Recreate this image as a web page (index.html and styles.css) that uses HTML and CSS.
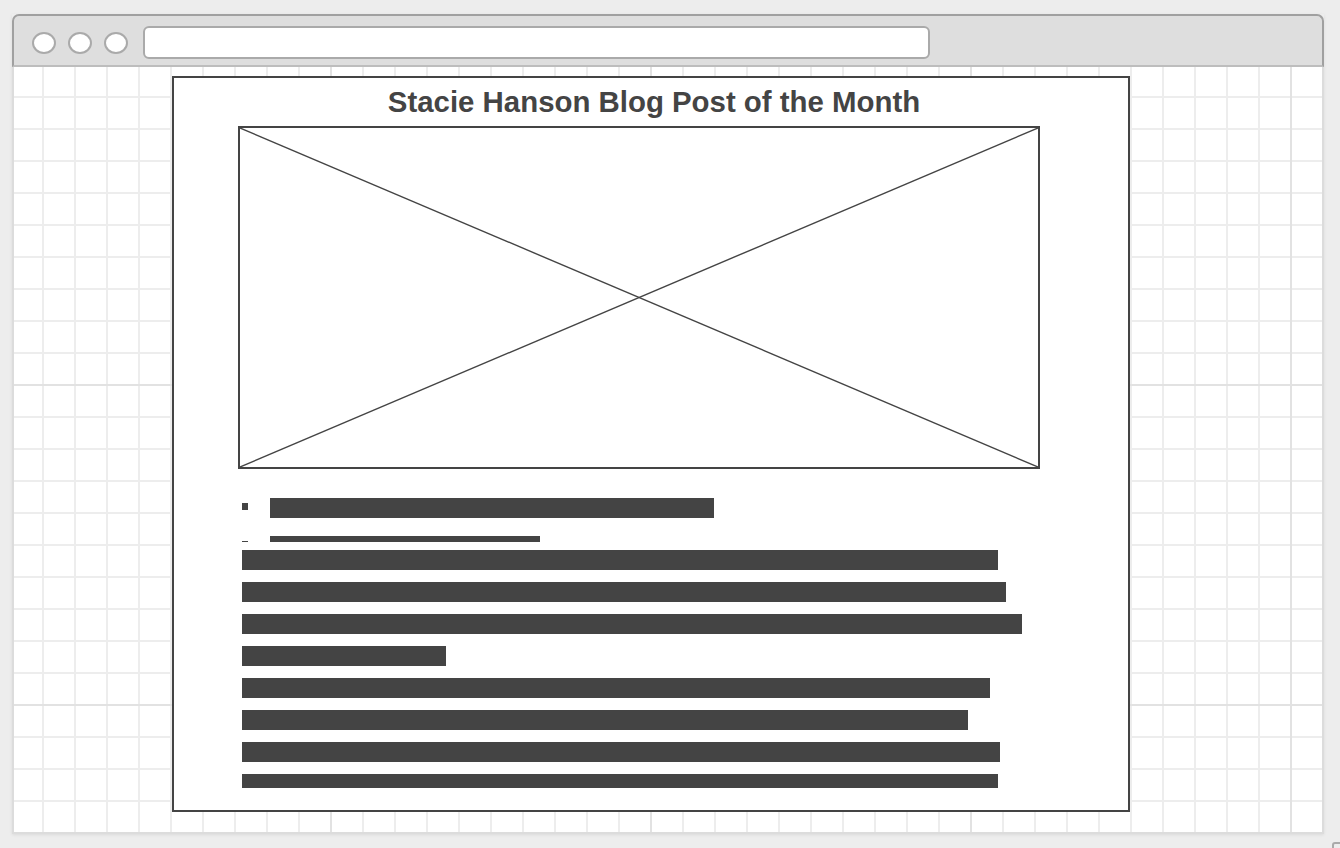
FILE: index.html
```html
<!DOCTYPE html>
<html lang="en">
<head>
  <meta charset="UTF-8">
  <title>Stacie Hanson Blog Post of the Month</title>
  <link rel="stylesheet" href="styles.css">
</head>
<body>

  <div class="window">
    <!-- Browser chrome -->
    <div class="titlebar">
      <div class="dots">
        <span class="dot"></span>
        <span class="dot"></span>
        <span class="dot"></span>
      </div>
      <div class="urlbar"></div>
    </div>

    <!-- Wireframe canvas -->
    <div class="canvas">
      <div class="card">
        <div class="title">Stacie Hanson Blog Post of the Month</div>

        <div class="image-box">
          <svg class="cross" viewBox="0 0 100 100" preserveAspectRatio="none">
            <line x1="0" y1="0" x2="100" y2="100" vector-effect="non-scaling-stroke"></line>
            <line x1="100" y1="0" x2="0" y2="100" vector-effect="non-scaling-stroke"></line>
          </svg>
        </div>

        <ul class="list">
          <li><span class="bullet"></span><span class="bar" style="width: 444px"></span></li>
          <li><span class="bullet"></span><span class="bar" style="width: 270px"></span></li>
        </ul>

        <div class="text">
          <div class="bar" style="width: 756px"></div>
          <div class="bar" style="width: 764px"></div>
          <div class="bar" style="width: 780px"></div>
          <div class="bar" style="width: 204px"></div>
          <div class="bar" style="width: 748px"></div>
          <div class="bar" style="width: 726px"></div>
          <div class="bar" style="width: 758px"></div>
          <div class="bar" style="width: 756px"></div>
        </div>
      </div>
    </div>
  </div>

  <div class="resize-handle"></div>

</body>
</html>
```

FILE: styles.css
```css
body, html {
  margin: 0;
  height: 100%;
  overflow: hidden;
  background-color: #ededed;
  font-family: "Liberation Sans", Arial, sans-serif;
  color: #444;
}

.window {
  width: 1312px;
  margin: 14px 0 0 12px;
  box-shadow: 0 1px 3px rgba(0, 0, 0, 0.08);
}

.titlebar {
  display: flex;
  align-items: center;
  gap: 15px;
  height: 33px;
  padding: 10px 0 6px 18px;
  background-color: #dedede;
  border: 2px solid #a0a0a0;
  border-bottom: 2px solid #bdbdbd;
  border-radius: 7px 7px 0 0;
}

.dots {
  display: flex;
  gap: 12px;
}

.dot {
  display: block;
  width: 20px;
  height: 18px;
  background-color: #fff;
  border: 2px solid #aaa;
  border-radius: 50%;
}

.urlbar {
  width: 783px;
  height: 29px;
  background-color: #fff;
  border: 2px solid #aaa;
  border-radius: 6px;
}

.canvas {
  height: 756px;
  padding: 9px 0 0 158px;
  background-color: #fff;
  border: 2px solid #dcdcdc;
  border-top: none;
  background-image:
    linear-gradient(to right, transparent 316px, #e2e2e2 316px, #e2e2e2 318px, transparent 318px),
    linear-gradient(to bottom, transparent 317px, #e2e2e2 317px, #e2e2e2 319px, transparent 319px),
    linear-gradient(to right, transparent 28px, #ededed 28px, #ededed 30px, transparent 30px),
    linear-gradient(to bottom, transparent 29px, #ededed 29px, #ededed 31px, transparent 31px);
  background-size: 320px 320px, 320px 320px, 32px 32px, 32px 32px;
}

.card {
  box-sizing: border-box;
  width: 958px;
  height: 736px;
  background-color: #fff;
  border: 2px solid #444;
}

.title {
  padding-top: 7px;
  padding-left: 6px;
  font-size: 29.4px;
  font-weight: 700;
  line-height: 34px;
  text-align: center;
  color: #444;
}

.image-box {
  box-sizing: border-box;
  width: 802px;
  height: 343px;
  margin: 7px 0 0 64px;
  border: 2px solid #444;
}

.cross {
  display: block;
  width: 100%;
  height: 100%;
}

.cross line {
  stroke: #444;
  stroke-width: 1.4;
}

.list {
  height: 44px;
  margin: 29px 0 0 68px;
  padding: 0;
  list-style: none;
  overflow: hidden;
}

.list li {
  display: flex;
  height: 38px;
}

.bullet {
  display: block;
  width: 6px;
  height: 7px;
  margin-top: 5px;
  margin-right: 22px;
  background-color: #444;
}

.bar {
  display: block;
  height: 20px;
  background-color: #444;
}

.text {
  display: flex;
  flex-direction: column;
  gap: 12px;
  height: 238px;
  margin: 8px 0 0 68px;
  overflow: hidden;
}

.text .bar {
  flex-shrink: 0;
}

.resize-handle {
  position: absolute;
  left: 1332px;
  top: 842px;
  width: 20px;
  height: 20px;
  border: 2px solid #aaa;
  border-radius: 3px;
}
```
